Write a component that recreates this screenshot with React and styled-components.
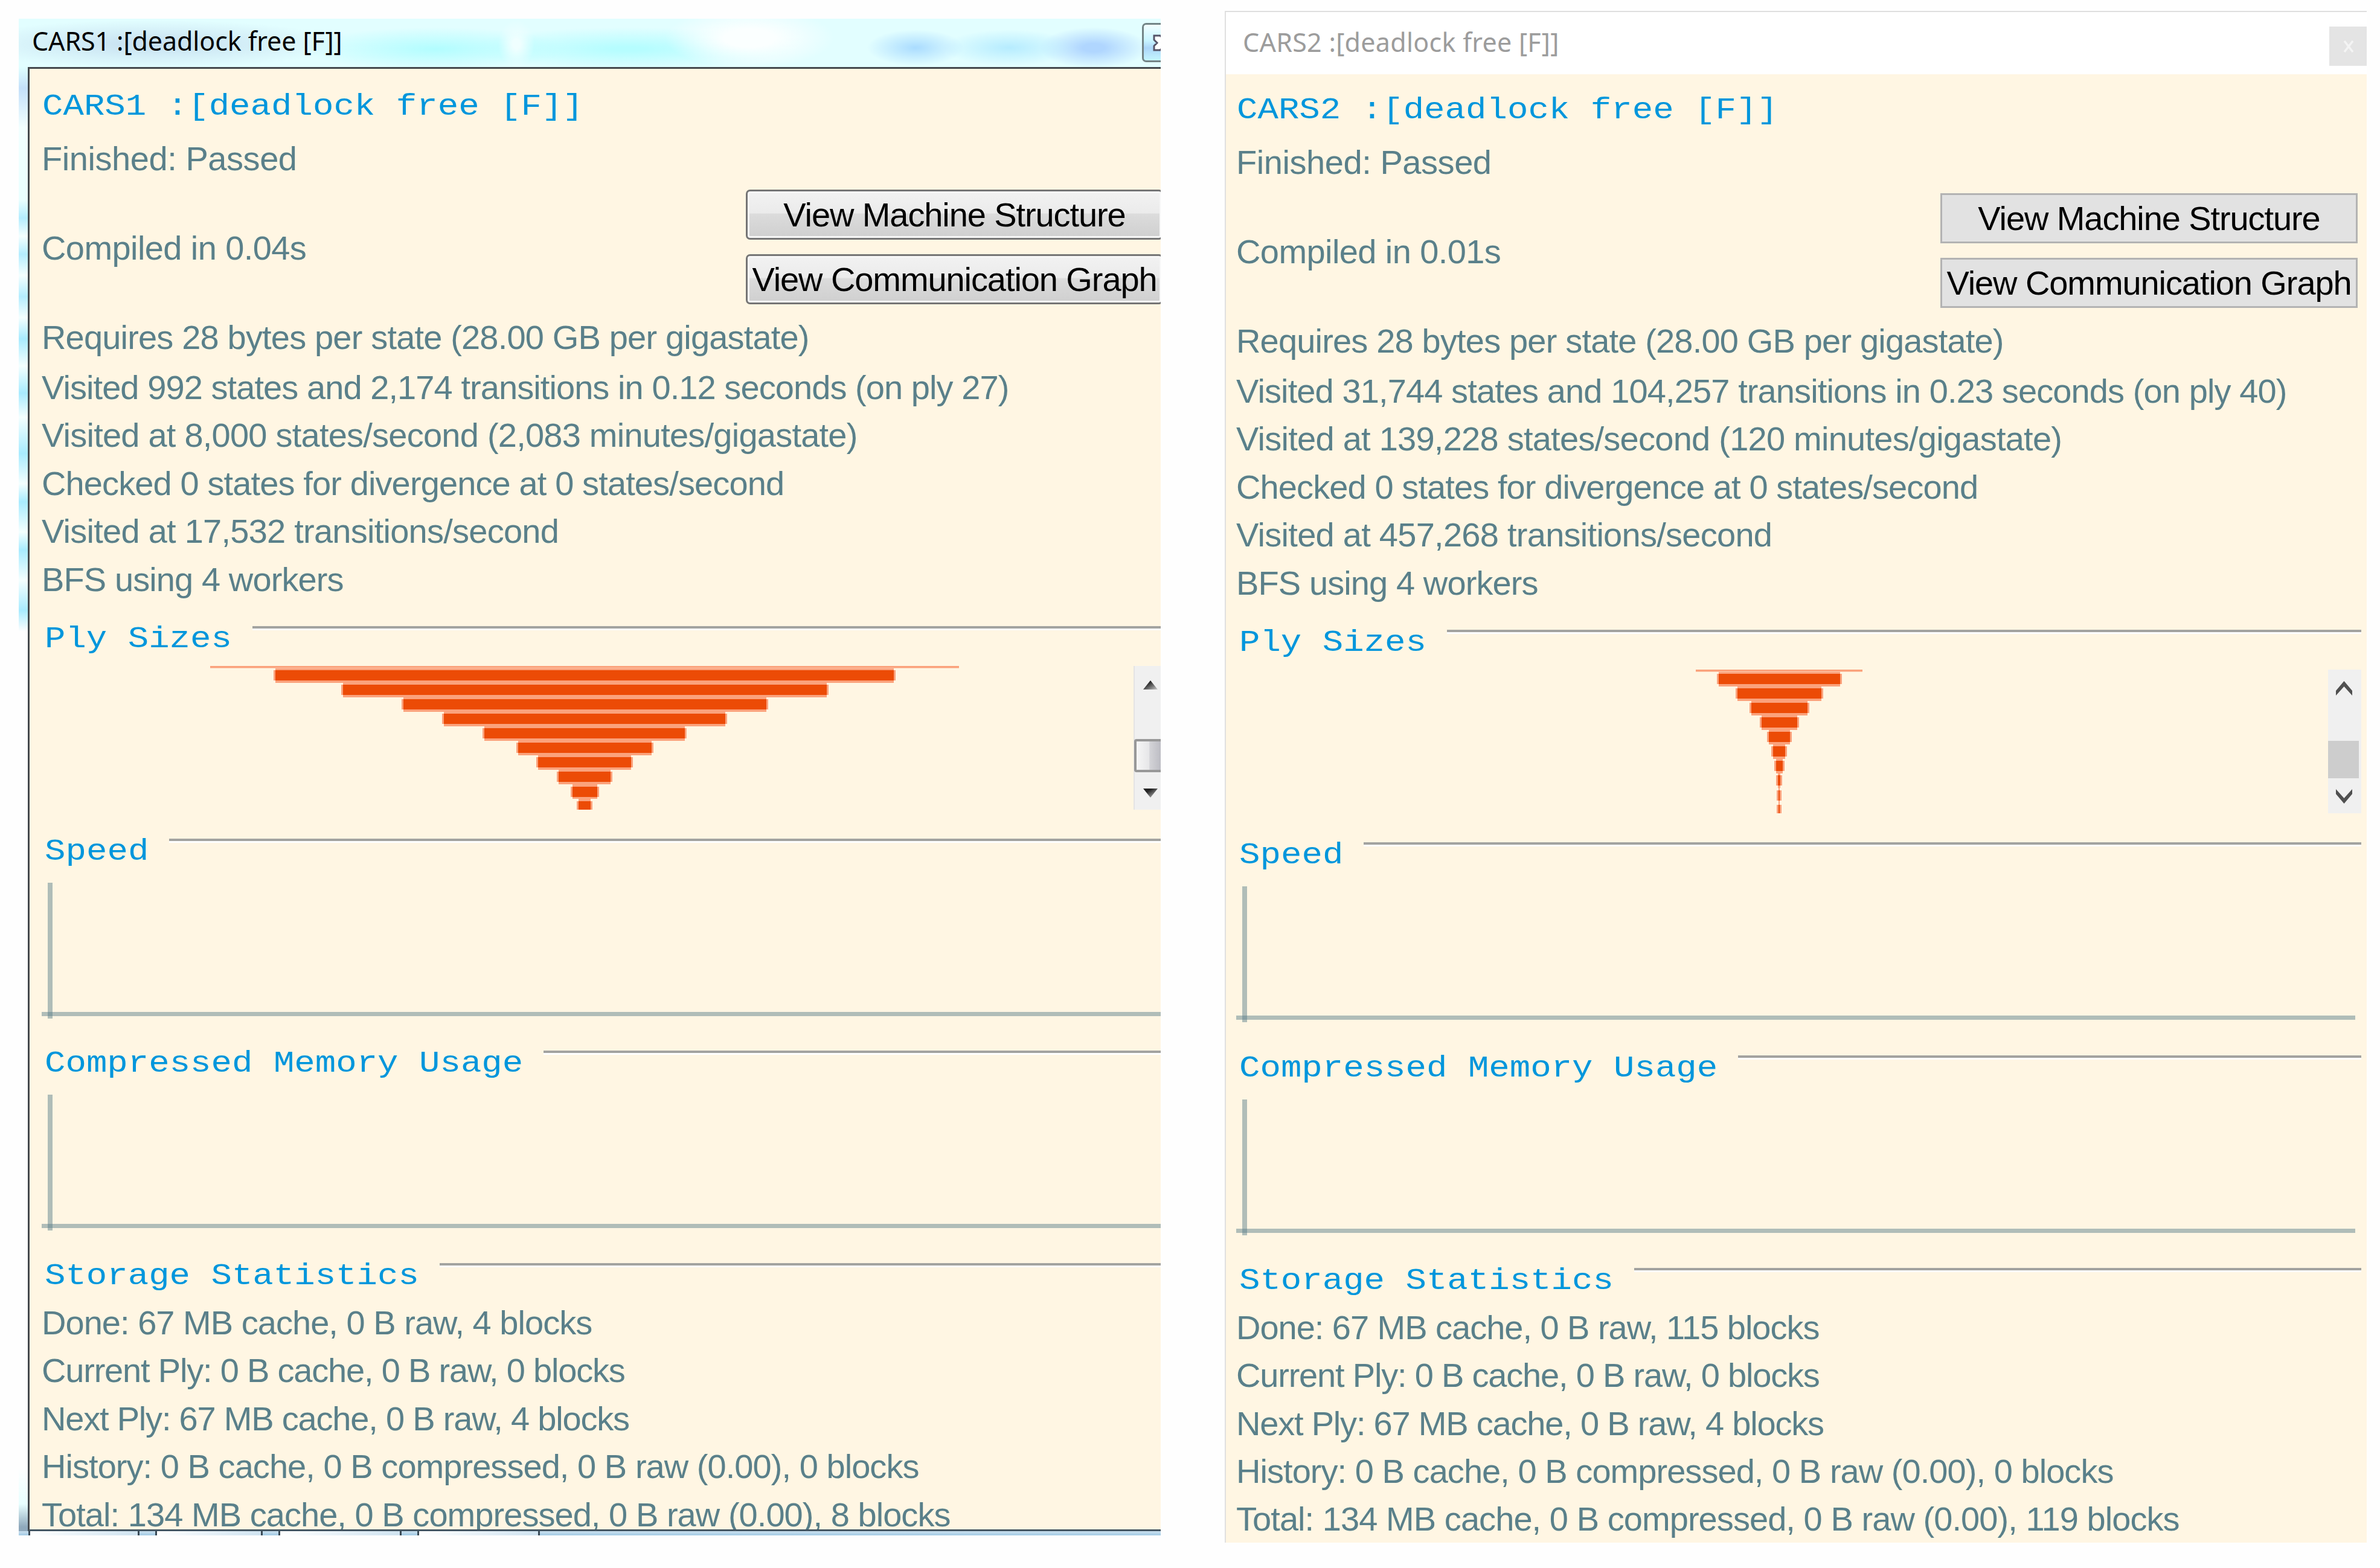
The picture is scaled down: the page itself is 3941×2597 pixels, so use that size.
import { useLayoutEffect, useRef, useState } from "react";
import styled, { createGlobalStyle } from "styled-components";

const cars1 = {
  name: "CARS1 :[deadlock free [F]]",
  titleWidth: 514,
  finished: ["Finished: Passed", 423],
  compiled: ["Compiled in 0.04s", 438],
  summary: [
    ["Requires 28 bytes per state (28.00 GB per gigastate)", 1271],
    ["Visited 992 states and 2,174 transitions in 0.12 seconds (on ply 27)", 1601],
    ["Visited at 8,000 states/second (2,083 minutes/gigastate)", 1351],
    ["Checked 0 states for divergence at 0 states/second", 1229],
    ["Visited at 17,532 transitions/second", 856],
    ["BFS using 4 workers", 500],
  ],
  plies: [1246, 1030, 807, 607, 472.5, 337.5, 227, 160.5, 92, 47, 26],
  storage: [
    ["Done: 67 MB cache, 0 B raw, 4 blocks", 911],
    ["Current Ply: 0 B cache, 0 B raw, 0 blocks", 966],
    ["Next Ply: 67 MB cache, 0 B raw, 4 blocks", 973],
    ["History: 0 B cache, 0 B compressed, 0 B raw (0.00), 0 blocks", 1453],
    ["Total: 134 MB cache, 0 B compressed, 0 B raw (0.00), 8 blocks", 1505],
  ],
};

const cars2 = {
  name: "CARS2 :[deadlock free [F]]",
  titleWidth: 524,
  finished: ["Finished: Passed", 423],
  compiled: ["Compiled in 0.01s", 438],
  summary: [
    ["Requires 28 bytes per state (28.00 GB per gigastate)", 1271],
    ["Visited 31,744 states and 104,257 transitions in 0.23 seconds (on ply 40)", 1740],
    ["Visited at 139,228 states/second (120 minutes/gigastate)", 1367],
    ["Checked 0 states for divergence at 0 states/second", 1228],
    ["Visited at 457,268 transitions/second", 887],
    ["BFS using 4 workers", 500],
  ],
  plies: [282, 207, 145, 99, 65, 41, 26, 17, 10, 8, 8],
  storage: [
    ["Done: 67 MB cache, 0 B raw, 115 blocks", 965],
    ["Current Ply: 0 B cache, 0 B raw, 0 blocks", 966],
    ["Next Ply: 67 MB cache, 0 B raw, 4 blocks", 973],
    ["History: 0 B cache, 0 B compressed, 0 B raw (0.00), 0 blocks", 1453],
    ["Total: 134 MB cache, 0 B compressed, 0 B raw (0.00), 119 blocks", 1562],
  ],
};

// Spreads the letters so that the text takes exactly `width` pixels
function Fit({ width, children }) {
  const ref = useRef(null);
  const [spacing, setSpacing] = useState(0);

  useLayoutEffect(() => {
    ref.current.style.letterSpacing = "0px";
    const natural = ref.current.offsetWidth;
    const next = (width - natural) / children.length;
    ref.current.style.letterSpacing = `${next}px`;
    setSpacing(next);
  }, [width, children]);

  return (
    <FitText ref={ref} style={{ letterSpacing: `${spacing}px` }}>
      {children}
    </FitText>
  );
}

function Mono({ children }) {
  return (
    <MonoText>
      <Fit width={children.length * 34.44}>{children}</Fit>
    </MonoText>
  );
}

function Section({ title, pitch, children }) {
  return (
    <StyledSection $pitch={pitch}>
      <SectionHead>
        <Mono>{title}</Mono>
        <Rule />
      </SectionHead>
      {children}
    </StyledSection>
  );
}

function Chart() {
  return (
    <StyledChart>
      <AxisY />
      <AxisX />
    </StyledChart>
  );
}

function Scrollbar({ aero }) {
  return (
    <Track $aero={aero}>
      <ArrowBox>
        {aero ? (
          <svg width="24" height="15" viewBox="0 0 24 15">
            <path d="M12 0 L24 15 H0 Z" fill="url(#arrow)" />
            <defs>
              <linearGradient id="arrow" x1="0" y1="0" x2="1" y2="1">
                <stop offset="0.3" stopColor="#222" />
                <stop offset="1" stopColor="#ccc" />
              </linearGradient>
            </defs>
          </svg>
        ) : (
          <svg width="27" height="24" viewBox="0 0 27 24">
            <path d="M13.5 0 L27 16 V24 L13.5 9 L0 24 V16 Z" fill="#505050" />
          </svg>
        )}
      </ArrowBox>
      <Thumb $aero={aero} />
      <ArrowBox>
        {aero ? (
          <svg width="24" height="15" viewBox="0 0 24 15">
            <path d="M12 15 L24 0 H0 Z" fill="url(#arrow)" />
          </svg>
        ) : (
          <svg width="27" height="24" viewBox="0 0 27 24">
            <path d="M13.5 24 L27 8 V0 L13.5 15 L0 0 V8 Z" fill="#505050" />
          </svg>
        )}
      </ArrowBox>
    </Track>
  );
}

function Report({ data, aero }) {
  const pitch = aero ? 351.7 : 352.3;

  return (
    <Body $aero={aero}>
      <Name>
        <Mono>{data.name}</Mono>
      </Name>
      <Status>
        <Fit width={data.finished[1]}>{data.finished[0]}</Fit>
      </Status>
      <Compile>
        <Fit width={data.compiled[1]}>{data.compiled[0]}</Fit>
        <Buttons>
          <Button $aero={aero}>
            <Fit width={566}>View Machine Structure</Fit>
          </Button>
          <Button $aero={aero}>
            <Fit width={670}>View Communication Graph</Fit>
          </Button>
        </Buttons>
      </Compile>
      <Summary>
        {data.summary.map(([text, width]) => (
          <Line key={text}>
            <Fit width={width}>{text}</Fit>
          </Line>
        ))}
      </Summary>
      <Section title="Ply Sizes" pitch={pitch}>
        <PlyView>
          <Funnel>
            {data.plies.map((width, i) => (
              <Ply key={i} style={{ width }} />
            ))}
          </Funnel>
          <Scrollbar aero={aero} />
        </PlyView>
      </Section>
      <Section title="Speed" pitch={pitch}>
        <Chart />
      </Section>
      <Section title="Compressed Memory Usage" pitch={pitch}>
        <Chart />
      </Section>
      <Section title="Storage Statistics">
        <Storage>
          {data.storage.map(([text, width]) => (
            <Line key={text}>
              <Fit width={width}>{text}</Fit>
            </Line>
          ))}
        </Storage>
      </Section>
    </Body>
  );
}

export default function App() {
  return (
    <>
      <GlobalStyle />
      <Page>
        <AeroWindow>
          <AeroTitle>
            <Fit width={cars1.titleWidth}>{cars1.name}</Fit>
            <AeroClose>
              <svg width="34" height="28" viewBox="0 0 34 28">
                <path
                  d="M2 2 H12 L17 7 L22 2 H32 V8 L25 14 L32 20 V26 H22 L17 21 L12 26 H2 V19 L7 14 L2 9 Z"
                  fill="#fff"
                  stroke="#565468"
                  strokeWidth="3"
                />
              </svg>
            </AeroClose>
          </AeroTitle>
          <AeroFrame>
            <AeroEdge />
            <Report data={cars1} aero />
          </AeroFrame>
          <Taskbar>
            <Tab $width={184} />
            <Tab $width={178} />
            <Tab $width={204} />
            <Tab $width={203} />
          </Taskbar>
        </AeroWindow>
        <FlatWindow>
          <FlatTitle>
            <Fit width={cars2.titleWidth}>{cars2.name}</Fit>
            <FlatClose>
              <svg width="18" height="20" viewBox="0 0 18 20">
                <path d="M2 1 L16 19 M16 1 L2 19" stroke="#f4f4f4" strokeWidth="3.5" />
              </svg>
            </FlatClose>
          </FlatTitle>
          <Report data={cars2} />
        </FlatWindow>
      </Page>
    </>
  );
}

const GlobalStyle = createGlobalStyle`
  * {
    box-sizing: border-box;
  }
  body {
    margin: 0;
    background: #fefefe;
    overflow: hidden;
  }
`;

const Page = styled.main`
  display: flex;
  align-items: flex-start;
  gap: 106px;
  width: 3941px;
  height: 2597px;
  padding: 18px 22px 0 31px;
  font-family: "Liberation Sans", Arial, sans-serif;
  font-size: 56px;
  color: #5a808a;
`;

const FitText = styled.span`
  display: inline-block;
  white-space: pre;
  flex-shrink: 0;
`;

const AeroWindow = styled.section`
  display: flex;
  flex-direction: column;
  width: 1891px;
  height: 2512px;
  margin-top: 13px;
  overflow: hidden;
`;

const AeroTitle = styled.header`
  display: flex;
  justify-content: space-between;
  height: 80px;
  padding: 7px 0 8px 22px;
  line-height: 59px;
  font-family: "Noto Sans", sans-serif;
  font-size: 43px;
  color: #000;
  background:
    radial-gradient(ellipse 320px 40px at 220px 42px, #c6dff0, transparent),
    radial-gradient(ellipse 80px 30px at 1485px 48px, #aadcff, transparent),
    radial-gradient(ellipse 110px 30px at 1640px 48px, #b6ecff, transparent),
    radial-gradient(ellipse 90px 34px at 1780px 48px, #b0d6ff 20%, transparent),
    radial-gradient(ellipse 140px 50px at 1210px 32px, #fbffff 30%, transparent),
    radial-gradient(ellipse 30px 40px at 824px 42px, #f0ffff 20%, transparent),
    radial-gradient(ellipse 220px 36px at 690px 50px, #b2fdff, transparent),
    radial-gradient(ellipse 270px 36px at 1010px 50px, #b6fdff 10%, transparent),
    #e2feff;
`;

const AeroClose = styled.div`
  display: flex;
  align-items: center;
  width: 31px;
  height: 65px;
  padding-left: 15px;
  border: 3px solid #738486;
  border-right: 0;
  border-radius: 7px 0 0 7px;
  background: linear-gradient(#f2ffff, #c8f4ff 45%, #acd6f8 65%, #c4f6ff);

  svg {
    flex-shrink: 0;
  }
`;

const AeroFrame = styled.div`
  display: flex;
  flex: 1;
  min-height: 0;
`;

const AeroEdge = styled.div`
  width: 15px;
  flex-shrink: 0;
  background: linear-gradient(
    #e0ffff 0,
    #c4e0fa 35px,
    #f2ffff 100px,
    #eaffff 220px,
    #b4edff 250px,
    #f4ffff 280px,
    #b4edff 310px,
    #f4ffff 345px,
    #b4edff 380px,
    #f4ffff 415px,
    #a8ebff 450px,
    #f4ffff 495px,
    #a8ebff 540px,
    #f4ffff 580px,
    #a8ebff 640px,
    #f4ffff 690px,
    #a8ebff 720px,
    #f4ffff 770px,
    #a8ebff 800px,
    #f4ffff 850px,
    #a8ebff 900px,
    #fefefe 935px,
    #fefefe 2320px,
    #e8ffff 2380px,
    #8fa9bc 2418px
  );
`;

const Body = styled.div`
  flex: 1;
  min-width: 0;
  min-height: 0;
  padding: ${({ $aero }) => ($aero ? "29px 0 0 20px" : "26px 0 0 17px")};
  background: #fff6e3;
  overflow: hidden;
  ${({ $aero }) =>
    $aero &&
    `
    border-top: 3px solid #44494d;
    border-left: 3px solid #44494d;
    border-bottom: 3px solid #435562;
    padding-bottom: 0;
  `}
`;

const MonoText = styled.span`
  display: inline-block;
  font-family: "Liberation Mono", "Courier New", monospace;
  font-size: 57.4px;
  color: #0096dc;
  transform: scaleY(0.86);
`;

const Name = styled.h1`
  height: 68px;
  margin: 0;
  padding-left: 1px;
  line-height: 60px;
  font-size: 1em;
  font-weight: 400;
`;

const Status = styled.p`
  height: 103px;
  margin: 0;
  line-height: 104px;
`;

const Compile = styled.div`
  display: flex;
  align-items: center;
  justify-content: space-between;
  width: 1857px;
  height: 189px;
  line-height: 68px;
  padding-top: 1px;

  & > ${FitText} {
    padding-top: 4px;
  }
`;

const Buttons = styled.div`
  display: flex;
  flex-direction: column;
  gap: 24px;
`;

const Button = styled.button`
  width: 691px;
  height: 83px;
  padding: 0;
  text-align: center;
  font: inherit;
  color: #000;
  border: 3px solid #b3b3b3;
  background: #e2e2e2;
  ${({ $aero }) =>
    $aero &&
    `
    border-color: #757575;
    border-radius: 7px;
    box-shadow: inset 0 0 0 3px #f6f6f6;
    background: linear-gradient(#f2f2f2, #ebebeb 47%, #dcdcdc 48%, #cfcfcf);
  `}
`;

const Summary = styled.div`
  margin: 16px 0 30px;

  p:first-child {
    margin-bottom: 3.6px;
  }
`;

const Line = styled.p`
  height: 79.4px;
  margin: 0;
  line-height: 79.4px;
`;

const StyledSection = styled.section`
  width: 1863px;
  height: ${({ $pitch }) => ($pitch ? `${$pitch}px` : "auto")};
`;

const SectionHead = styled.div`
  display: flex;
  gap: 34px;
  height: 60px;
  padding-left: 5px;
  line-height: 60px;
`;

const Rule = styled.div`
  flex: 1;
  height: 7px;
  margin-top: 8px;
  border-top: 4px solid #a3a3a0;
  background: #fff;
`;

const PlyView = styled.div`
  display: flex;
  height: 238px;
  margin-top: 14px;
`;

const Funnel = styled.div`
  display: flex;
  flex-direction: column;
  align-items: center;
  width: 1798px;
  overflow: hidden;

  /* the list is scrolled: only the lower edge of the first ply shows */
  & > :first-child {
    margin-top: -20.5px;
  }
`;

const Ply = styled.div`
  flex-shrink: 0;
  height: 24.07px;
  background:
    linear-gradient(#ec4b06, #ec4b06) center / calc(100% - 6px) 17px no-repeat,
    linear-gradient(#fba27c, #fba27c) center / calc(100% - 6px) 100% no-repeat,
    linear-gradient(#fba27c, #fba27c) center / 100% 17px no-repeat;
`;

const Track = styled.div`
  display: flex;
  flex-direction: column;
  align-items: center;
  width: 55px;
  margin-left: 10px;
  background: #f0f0f0;
  ${({ $aero }) => $aero && "border-left: 2px solid #e4e4e4;"}
`;

const ArrowBox = styled.div`
  display: flex;
  align-items: center;
  justify-content: center;
  width: 100%;
  height: 63px;
  padding-right: 2px;

  &:last-child {
    height: 58px;
    margin-top: auto;
    padding-top: 3px;
  }
`;

const Thumb = styled.div`
  width: 51px;
  height: 62px;
  margin: 55px 4px 0 0;
  background: #cdcdcd;
  ${({ $aero }) =>
    $aero &&
    `
    width: 55px;
    height: 55px;
    margin: 58px 0 0;
    border: 4px solid #989898;
    border-radius: 4px;
    background: linear-gradient(90deg, #f6f6f6, #e6e6e8 45%, #d4d4d8 46%, #b4b4bc);
  `}
`;

const StyledChart = styled.div`
  display: grid;
  grid-template-columns: 10px 8px 1fr;
  grid-template-rows: 214px 7px 4px;
  width: 1853px;
  margin-top: 21px;
`;

const AxisY = styled.div`
  grid-column: 2;
  grid-row: 1 / 4;
  background: rgba(90, 128, 138, 0.48);
`;

const AxisX = styled.div`
  grid-column: 1 / 4;
  grid-row: 2;
  background: rgba(90, 128, 138, 0.48);
`;

const Storage = styled.div`
  margin-top: 7px;
`;

const Taskbar = styled.div`
  display: flex;
  gap: 26px;
  flex-shrink: 0;
  height: 7px;
  padding-left: 16px;
  background: linear-gradient(#c9dfee, #a3cbe5);
`;

const Tab = styled.div`
  width: ${({ $width }) => $width}px;
  border: solid #3a4a56;
  border-width: 0 3px;
  background: linear-gradient(90deg, #fff, #cfe3f0);
`;

const FlatWindow = styled.section`
  display: flex;
  flex-direction: column;
  width: 1891px;
  height: 2537px;
  border-top: 2px solid #dfdfdf;
  border-left: 2px solid #e0e0e0;
  overflow: hidden;
`;

const FlatTitle = styled.header`
  display: flex;
  justify-content: space-between;
  height: 103px;
  padding: 24px 0 14px 28px;
  line-height: 51px;
  font-family: "Noto Sans", sans-serif;
  font-size: 43px;
  color: #9c9c9c;
  background: #fff;
`;

const FlatClose = styled.div`
  display: flex;
  align-items: center;
  width: 62px;
  height: 65px;
  padding-left: 23px;
  background: #e4e4e4;
`;
